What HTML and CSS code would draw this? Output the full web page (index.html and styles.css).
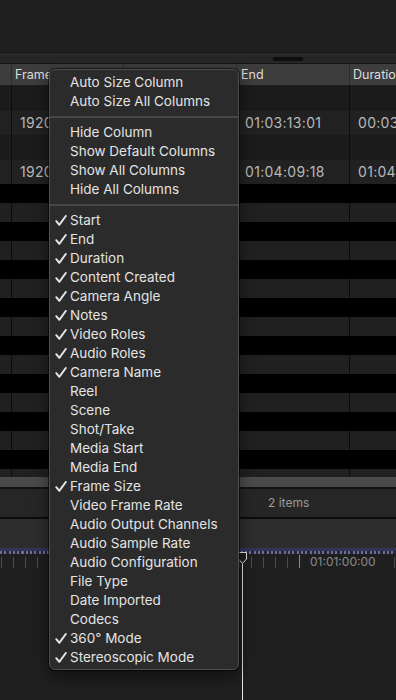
FILE: index.html
```html
<!DOCTYPE html>
<html>
<head>
<meta charset="utf-8">
<link rel="stylesheet" href="styles.css">
</head>
<body>
<div class="app">
  <div class="viewer"></div>
  <div class="splitter"><span class="grip"></span></div>
  <div class="thead">
    <div class="hc"></div>
    <div class="hc">Frame</div>
    <div class="hc"></div>
    <div class="hc">End</div>
    <div class="hc">Duration</div>
  </div>
  <div class="clip">
    <div class="clip-top"><div class="cc"></div><div class="cc"></div><div class="cc"></div><div class="cc"></div><div class="cc"></div></div>
    <div class="clip-main"><div class="cc"></div><div class="cc">1920</div><div class="cc"></div><div class="cc">01:03:13:01</div><div class="cc">00:03:13:01</div></div>
  </div>
  <div class="clip">
    <div class="clip-top"><div class="cc"></div><div class="cc"></div><div class="cc"></div><div class="cc"></div><div class="cc"></div></div>
    <div class="clip-main"><div class="cc"></div><div class="cc">1920</div><div class="cc"></div><div class="cc">01:04:09:18</div><div class="cc">01:04:09:18</div></div>
  </div>
  <div class="gap"></div>
  <div class="stripes">
    <div class="srow gray"><i></i><i></i><i></i><i></i><i></i></div>
    <div class="srow"></div>
    <div class="srow gray"><i></i><i></i><i></i><i></i><i></i></div>
    <div class="srow"></div>
    <div class="srow gray"><i></i><i></i><i></i><i></i><i></i></div>
    <div class="srow"></div>
    <div class="srow gray"><i></i><i></i><i></i><i></i><i></i></div>
    <div class="srow"></div>
    <div class="srow gray"><i></i><i></i><i></i><i></i><i></i></div>
    <div class="srow"></div>
    <div class="srow gray"><i></i><i></i><i></i><i></i><i></i></div>
    <div class="srow"></div>
    <div class="srow gray"><i></i><i></i><i></i><i></i><i></i></div>
    <div class="srow"></div>
    <div class="srow gray"><i></i><i></i><i></i><i></i><i></i></div>
  </div>
  <div class="scroller"></div>
  <div class="status"><span>2 items</span></div>
  <div class="toolbar"></div>
  <div class="range"></div>
  <div class="ruler"><span class="tc">01:01:00:00</span></div>
  <div class="timeline"></div>

  <svg class="playhead" width="10" height="148" viewBox="0 0 10 148">
    <path d="M5.5 12 V148" stroke="#e8e8e8" stroke-width="1" fill="none"/>
    <path d="M1.5 0.5 H9.5 V7 L5.5 11.5 L1.5 7 Z" stroke="#e8e8e8" stroke-width="1" fill="#1f1f1f"/>
  </svg>

  <div class="menu">
    <div class="mi">Auto Size Column</div>
    <div class="mi">Auto Size All Columns</div>
    <div class="sep"></div>
    <div class="mi">Hide Column</div>
    <div class="mi">Show Default Columns</div>
    <div class="mi">Show All Columns</div>
    <div class="mi">Hide All Columns</div>
    <div class="sep"></div>
    <div class="mi on">Start</div>
    <div class="mi on">End</div>
    <div class="mi on">Duration</div>
    <div class="mi on">Content Created</div>
    <div class="mi on">Camera Angle</div>
    <div class="mi on">Notes</div>
    <div class="mi on">Video Roles</div>
    <div class="mi on">Audio Roles</div>
    <div class="mi on">Camera Name</div>
    <div class="mi">Reel</div>
    <div class="mi">Scene</div>
    <div class="mi">Shot/Take</div>
    <div class="mi">Media Start</div>
    <div class="mi">Media End</div>
    <div class="mi on">Frame Size</div>
    <div class="mi">Video Frame Rate</div>
    <div class="mi">Audio Output Channels</div>
    <div class="mi">Audio Sample Rate</div>
    <div class="mi">Audio Configuration</div>
    <div class="mi">File Type</div>
    <div class="mi">Date Imported</div>
    <div class="mi">Codecs</div>
    <div class="mi on">360° Mode</div>
    <div class="mi on">Stereoscopic Mode</div>
  </div>
</div>
</body>
</html>
```

FILE: styles.css
```css
* { box-sizing: border-box; margin: 0; padding: 0; }
html, body { width: 396px; height: 700px; overflow: hidden; background: #1f1f1f; }
body { font-family: Inter, "Noto Sans", sans-serif; -webkit-font-smoothing: antialiased; }

.app { position: relative; width: 396px; height: 700px; display: flex; flex-direction: column; }

.viewer { height: 55px; background: #1f1f1f; border-bottom: 1px solid #313131; flex: none; }
.splitter { height: 9px; background: #262626; border-bottom: 1px solid #151515; padding: 2px 0 0 273px; flex: none; display: flex; }
.grip { width: 30px; height: 4px; border-radius: 2px; background: #0e0e0e; }

.thead, .clip-top, .clip-main, .srow.gray {
  display: grid;
  grid-template-columns: 12px 112px 113px 113px 1fr;
}
.thead { height: 22px; background: #3d3d3d; border-bottom: 1px solid #1b1b1b; flex: none; }
.hc { border-right: 1px solid #2c2c2c; color: #dedede; font-size: 12.5px; line-height: 21px; padding-left: 3px; white-space: nowrap; overflow: hidden; }
.hc:nth-child(4) { padding-left: 4px; }
.hc:nth-child(5) { padding-left: 3px; border-right: 0; }

.clip { flex: none; }
.clip-top { height: 25px; background: #1b1b1b; }
.clip-main { height: 24px; background: #212121; }
.cc { border-right: 1px solid #0c0c0c; color: #b8b8b8; font-size: 14px; letter-spacing: 0.3px; line-height: 24px; padding-left: 8px; white-space: nowrap; overflow: hidden; }
.cc:first-child { padding-left: 0; }
.cc:last-child { border-right: 0; }

.gap { height: 19px; background: #000; flex: none; }

.stripes { height: 274px; overflow: hidden; flex: none; background: #000; }
.srow { height: 19px; background: #000; }
.srow.gray { background: #202020; }
.srow.gray i { border-right: 1px solid #0a0a0a; }
.srow.gray i:last-child { border-right: 0; }

.scroller { height: 12px; background: #4a4a4a; border-bottom: 2px solid #121212; flex: none; }
.status { height: 30px; background: #262626; border-bottom: 2px solid #0c0c0c; flex: none; padding-left: 268px; }
.status span { color: #9b9b9b; font-size: 12px; line-height: 28px; }
.toolbar { height: 29px; background: #2d2d2d; flex: none; }
.range {
  height: 7px; flex: none;
  background:
    linear-gradient(#32325a, #32325a) top / 100% 3px no-repeat,
    repeating-linear-gradient(to right, #6e6e8e 0 2px, #25253c 2px 4.3px) 0 3px / 100% 3px no-repeat,
    #1f1f1f;
}
.ruler {
  height: 15px; flex: none; display: flex; align-items: stretch;
  background:
    repeating-linear-gradient(to right, #4c4c4c 0 1px, transparent 1px 11.92px) 1px 2px / 100% 11px no-repeat,
    #1f1f1f;
}
.tc { margin-left: 299px; height: 13px; border-left: 1px solid #8a8a8a; background: #1f1f1f; padding: 0 13px 0 10px; color: #8a8a8a; font-size: 12px; line-height: 13px; }
.timeline { flex: 1; background: #1f1f1f; }

.playhead { position: absolute; left: 237px; top: 552px; }

.menu {
  position: absolute; left: 49px; top: 69px; width: 190px; height: 601px;
  background: #2b2b2b; border: 1px solid #4e4e4e; border-radius: 6px;
  box-shadow: 0 0 0 1px rgba(0,0,0,.55), 0 6px 16px rgba(0,0,0,.5);
  padding: 3px 0 2px;
}
.mi { position: relative; height: 19px; line-height: 19px; padding-left: 20px; color: #e4e4e4; font-size: 13.5px; white-space: nowrap; }
.mi.on::before {
  content: ""; position: absolute; left: 5px; top: 4px; width: 12px; height: 11px;
  background: url("data:image/svg+xml;utf8,<svg xmlns='http://www.w3.org/2000/svg' width='12' height='11' viewBox='0 0 12 11'><path d='M1.3 6.2 L4.3 9.8 L10.8 1' stroke='%23e4e4e4' stroke-width='2' fill='none' stroke-linecap='round' stroke-linejoin='round'/></svg>") no-repeat;
}
.sep { height: 12px; padding: 5px 0; }
.sep::after { content: ""; display: block; height: 2px; background: #474747; }
```
